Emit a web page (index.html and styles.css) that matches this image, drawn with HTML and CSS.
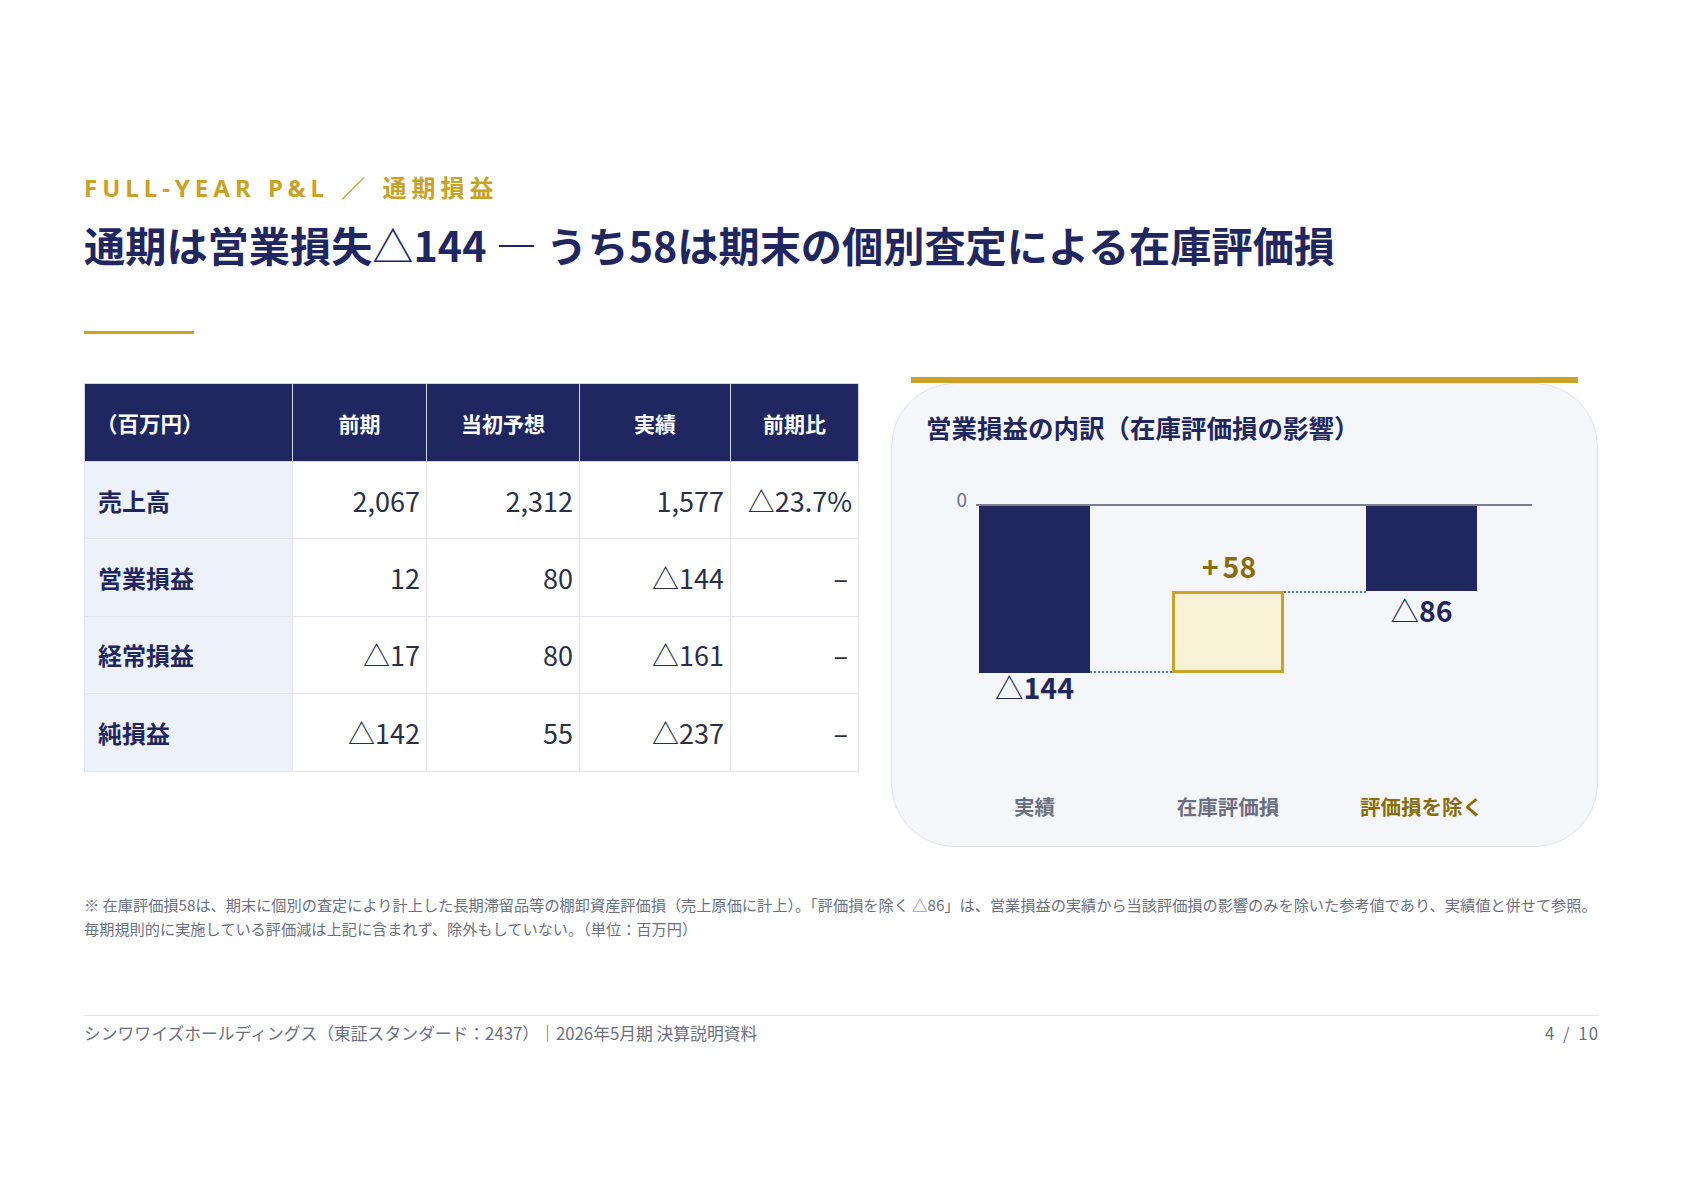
FILE: index.html
```html
<!DOCTYPE html>
<html lang="ja">
<head>
<meta charset="utf-8">
<title>通期損益</title>
<link rel="stylesheet" href="styles.css">
</head>
<body>
<div class="slide">
  <div class="eyebrow">FULL-YEAR P&amp;L ／ 通期損益</div>
  <h1 class="title">通期は営業損失<span class="tri">△</span>144 — うち58は期末の個別査定による在庫評価損</h1>
  <div class="rule"></div>

  <div class="content">
    <table class="pl">
      <colgroup>
        <col class="c1"><col class="c2"><col class="c3"><col class="c4"><col class="c5">
      </colgroup>
      <thead>
        <tr>
          <th class="unit">（百万円）</th>
          <th>前期</th>
          <th>当初予想</th>
          <th>実績</th>
          <th>前期比</th>
        </tr>
      </thead>
      <tbody>
        <tr>
          <td class="label">売上高</td>
          <td class="num">2,067</td>
          <td class="num">2,312</td>
          <td class="num">1,577</td>
          <td class="num">△23.7%</td>
        </tr>
        <tr>
          <td class="label">営業損益</td>
          <td class="num">12</td>
          <td class="num">80</td>
          <td class="num">△144</td>
          <td class="num dash">–</td>
        </tr>
        <tr>
          <td class="label">経常損益</td>
          <td class="num">△17</td>
          <td class="num">80</td>
          <td class="num">△161</td>
          <td class="num dash">–</td>
        </tr>
        <tr>
          <td class="label">純損益</td>
          <td class="num">△142</td>
          <td class="num">55</td>
          <td class="num">△237</td>
          <td class="num dash">–</td>
        </tr>
      </tbody>
    </table>

    <div class="chart-col">
      <div class="chart-accent"></div>
      <div class="card">
        <div class="card-title">営業損益の内訳（在庫評価損の影響）</div>
        <svg class="wf" width="705" height="402" viewBox="0 0 705 402">
          <rect x="87" y="62" width="111" height="168" fill="#1f2660"/>
          <rect x="281.5" y="149.5" width="109" height="79" fill="#faf2d6" stroke="#c9a227" stroke-width="3"/>
          <rect x="474" y="62" width="111" height="86" fill="#1f2660"/>
          <line x1="198" y1="229" x2="280" y2="229" stroke="#4a7fc4" stroke-width="2" stroke-dasharray="2 2"/>
          <line x1="392" y1="149" x2="474" y2="149" stroke="#4a7fc4" stroke-width="2" stroke-dasharray="2 2"/>
          <line x1="84" y1="62" x2="640" y2="62" stroke="#7b7f8e" stroke-width="2"/>
          <text class="zero" x="75" y="64" text-anchor="end">0</text>
          <text class="val navy" x="142.5" y="256" text-anchor="middle"><tspan class="tri">△</tspan>144</text>
          <text class="val gold" x="337" y="135" text-anchor="middle"><tspan class="plus">+</tspan>58</text>
          <text class="val navy" x="529.5" y="179" text-anchor="middle"><tspan class="tri">△</tspan>86</text>
          <text class="cat" x="142.5" y="372" text-anchor="middle">実績</text>
          <text class="cat" x="336" y="372" text-anchor="middle">在庫評価損</text>
          <text class="cat gold" x="529.5" y="372" text-anchor="middle">評価損を除く</text>
        </svg>
      </div>
    </div>
  </div>

  <p class="note">※ 在庫評価損58は、期末に個別の査定により計上した長期滞留品等の棚卸資産評価損（売上原価に計上）。「評価損を除く △86」は、営業損益の実績から当該評価損の影響のみを除いた参考値であり、実績値と併せて参照。<br>毎期規則的に実施している評価減は上記に含まれず、除外もしていない。（単位：百万円）</p>

  <footer class="footer">
    <span>シンワワイズホールディングス（東証スタンダード：2437）｜2026年5月期 決算説明資料</span>
    <span class="page">4 / 10</span>
  </footer>
</div>
</body>
</html>
```

FILE: styles.css
```css
html, body {
  margin: 0;
  padding: 0;
  background: #ffffff;
}

.slide {
  width: 1683px;
  height: 1190px;
  box-sizing: border-box;
  padding: 173px 84px 0 84px;
  font-family: "Noto Sans CJK JP", "Noto Sans", sans-serif;
  color: #1f2660;
}

.eyebrow {
  font-family: "Noto Sans", "Noto Sans CJK JP", sans-serif;
  font-weight: 700;
  font-size: 24px;
  line-height: 30px;
  letter-spacing: 5px;
  word-spacing: 1px;
  color: #c9a227;
}

.title {
  margin: 15px 0 0;
  font-size: 41.2px;
  line-height: 52px;
  font-weight: 700;
  color: #1f2660;
}

.tri {
  font-weight: 400;
}

.rule {
  width: 110px;
  height: 3px;
  background: #c9a227;
  margin-top: 61px;
}

.content {
  display: grid;
  grid-template-columns: 774px 707px;
  column-gap: 33px;
  align-items: start;
  margin-top: 43px;
}

/* table */
.pl {
  width: 774px;
  margin-top: 6px;
  border-collapse: collapse;
  table-layout: fixed;
}
.pl .c1 { width: 208px; }
.pl .c2 { width: 134px; }
.pl .c3 { width: 153px; }
.pl .c4 { width: 151px; }
.pl .c5 { width: 128px; }

.pl th {
  height: 77px;
  padding: 0;
  background: #1f2660;
  color: #ffffff;
  font-size: 21px;
  font-weight: 700;
  text-align: center;
  border: 1px solid #d3d7e2;
}
.pl th.unit {
  text-align: left;
  padding-left: 11px;
  font-size: 21.5px;
}

.pl td {
  height: 76.4px;
  padding: 0;
  border: 1px solid #e3e6ed;
  background: #ffffff;
}
.pl td.label {
  background: #edf1fa;
  color: #1f2660;
  font-size: 24px;
  font-weight: 700;
  padding-left: 13px;
}
.pl td.num {
  text-align: right;
  padding-right: 6px;
  font-size: 27px;
  font-weight: 400;
  color: #2b3046;
}
.pl td.dash {
  padding-right: 10px;
}

/* chart card */
.chart-col {
  display: flex;
  flex-direction: column;
}
.chart-accent {
  height: 6px;
  margin: 0 20px;
  background: #c9a227;
}
.card {
  box-sizing: border-box;
  height: 464px;
  border: 1px solid #e2e4ec;
  border-radius: 64px;
  background: #f5f6fa;
}
.card-title {
  padding: 27px 0 0 34px;
  font-size: 25.5px;
  line-height: 32px;
  font-weight: 700;
  color: #1f2660;
}
.wf {
  display: block;
}
.wf text {
  font-family: "Noto Sans CJK JP", "Noto Sans", sans-serif;
}
.wf .zero {
  font-size: 19px;
  fill: #6b7080;
}
.wf .val {
  font-size: 28.5px;
  font-weight: 700;
}
.wf .val .tri {
  font-weight: 400;
}
.wf .val .plus {
  letter-spacing: 4px;
}
.wf .navy { fill: #1f2660; }
.wf .cat {
  font-size: 20.5px;
  font-weight: 700;
  fill: #6b7080;
}
.wf .gold { fill: #8a6d0a; }

/* notes */
.note {
  margin: 45px 0 0;
  font-size: 15.2px;
  line-height: 24px;
  color: #6b7080;
  white-space: nowrap;
}

.footer {
  margin-top: 75px;
  border-top: 1px solid #e3e5ea;
  padding-top: 5px;
  display: flex;
  justify-content: space-between;
  font-size: 16.8px;
  line-height: 24px;
  color: #6b7080;
}
.footer .page {
  word-spacing: 3px;
  letter-spacing: 1px;
}
```
